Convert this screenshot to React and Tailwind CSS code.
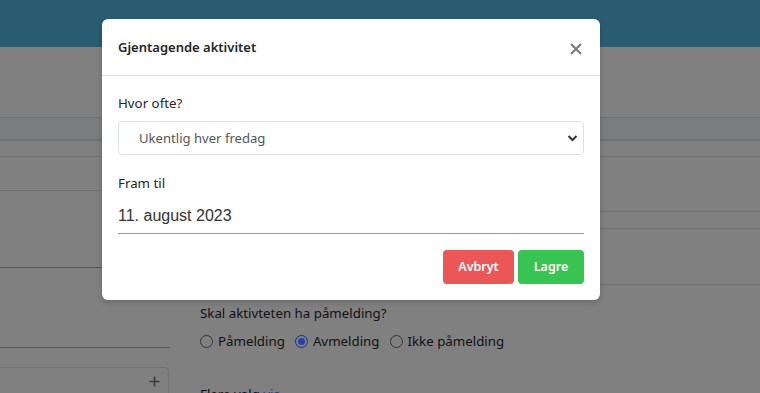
import React from "react";

function Radio({ checked, label }) {
  return (
    <label className="flex items-center gap-[5px]">
      <span
        className={
          "flex h-[13px] w-[13px] items-center justify-center rounded-full border " +
          (checked ? "border-[#1d2f7a]" : "border-[#333333]")
        }
      >
        {checked && <span className="h-[7px] w-[7px] rounded-full bg-[#2a3fae]" />}
      </span>
      <span>{label}</span>
    </label>
  );
}

export default function App() {
  return (
    <div
      className="relative h-[393px] w-[760px] overflow-hidden bg-[#808080] text-[#111111]"
      style={{ fontFamily: '"Segoe UI", "Noto Sans", sans-serif' }}
    >
      {/* background page */}
      <div className="h-[47px] bg-[#2a5c72]" />
      <div className="h-[70px]" />
      <div className="h-[24px] border-t border-b-2 border-t-[#707070] border-b-[#6a7177] bg-[#7b7c7e]" />
      <div className="h-[16px] border-b border-[#727272]" />
      <div className="flex">
        <div className="w-[170px] shrink-0">
          <div className="h-[34px] border-b border-[#727272]" />
          <div className="h-[77px] border-b border-[#555555]" />
          <div className="h-[80px] border-b border-[#555555]" />
          <div className="mt-[19px] flex h-[40px] w-[169px] items-start justify-end rounded-tr-[4px] border-t border-r border-[#747474] pr-[8px] pt-[8px]">
            <svg width="11" height="11" viewBox="0 0 11 11">
              <path d="M5.5 0.5v10M0.5 5.5h10" stroke="#3a3a3a" strokeWidth="1.6" />
            </svg>
          </div>
        </div>
        <div className="flex-1">
          <div className="h-[55px] border-b border-[#727272]" />
          <div className="h-[17px] border-b border-[#727272]" />
          <div className="h-[56px] border-b border-[#727272]" />
          <div className="pl-[30px] pt-[18px] text-[13.3px] leading-[20px]">
            <div>Skal aktivteten ha påmelding?</div>
            <div className="mt-[8px] flex items-center gap-[10px]">
              <Radio label="Påmelding" />
              <Radio checked label="Avmelding" />
              <Radio label="Ikke påmelding" />
            </div>
            <div className="mt-[33px]">
              Flere valg <span className="text-[#1f3f8f]">vis</span>
            </div>
          </div>
        </div>
      </div>

      {/* modal */}
      <div className="absolute left-[102px] top-[19px] w-[498px] rounded-[6px] bg-white shadow-[0_2px_6px_rgba(0,0,0,0.2)]">
        <div className="flex h-[57px] items-center justify-between border-b border-[#dee2e6] pl-[16px] pr-[18px]">
          <div className="pt-[2px] text-[13px] font-semibold text-[#212529]">Gjentagende aktivitet</div>
          <svg width="12" height="12" viewBox="0 0 12 12" className="mt-[4px]">
            <path d="M1 1L11 11M11 1L1 11" stroke="#777777" strokeWidth="2" />
          </svg>
        </div>
        <div className="px-[16px] pt-[17px] text-[13.3px] leading-[20px] text-[#212529]">
          <div>Hvor ofte?</div>
          <div className="mt-[8px] flex h-[34px] items-center justify-between rounded-[4px] border border-[#dee2e6] pl-[20px] pr-[5px]">
            <span className="text-[13.1px] text-[#555555]">Ukentlig hver fredag</span>
            <svg width="11" height="8" viewBox="0 0 11 8">
              <path d="M1.5 2l4 4 4-4" fill="none" stroke="#333333" strokeWidth="2" />
            </svg>
          </div>
          <div className="mt-[18px]">Fram til</div>
          <div
            className="mt-[7px] flex h-[34px] items-center border-b border-[#999999] pb-[1px] text-[16px] text-[#333333]"
            style={{ fontFamily: '"Liberation Sans", Arial, sans-serif' }}
          >
            11. august 2023
          </div>
        </div>
        <div className="flex justify-end gap-[4px] px-[16px] pb-[16px] pt-[16px]">
          <button className="flex h-[34px] w-[71px] items-center justify-center rounded-[4px] bg-[#eb5757] text-[12.5px] font-semibold text-white">
            Avbryt
          </button>
          <button className="flex h-[34px] w-[66px] items-center justify-center rounded-[4px] bg-[#37c452] text-[12.5px] font-semibold text-white">
            Lagre
          </button>
        </div>
      </div>
    </div>
  );
}
